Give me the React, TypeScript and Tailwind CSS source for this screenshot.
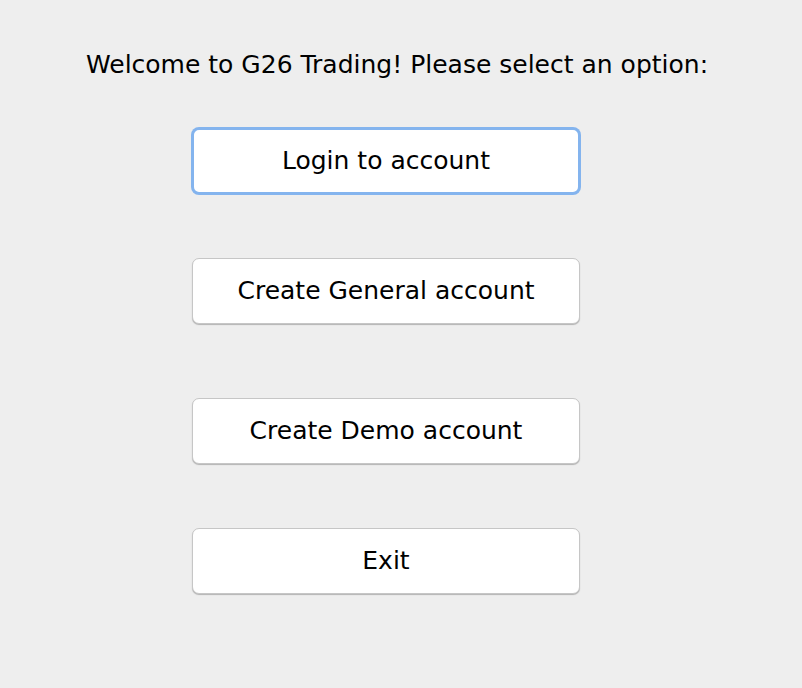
const options = [
  { label: 'Login to account', focused: true, mt: 'mt-[48px]' },
  { label: 'Create General account', focused: false, mt: 'mt-[64px]' },
  { label: 'Create Demo account', focused: false, mt: 'mt-[74px]' },
  { label: 'Exit', focused: false, mt: 'mt-[64px]' },
];

export default function App() {
  return (
    <div
      className="w-[802px] h-[688px] bg-[#eeeeee] text-black"
      style={{ fontFamily: '"DejaVu Sans", "Liberation Sans", sans-serif' }}
    >
      <div className="pt-[50px] pl-[86px] text-[25px] leading-[30px] h-[80px] whitespace-nowrap">
        Welcome to G26 Trading! Please select an option:
      </div>
      <div className="pl-[192px] flex flex-col">
        {options.map((o) => (
          <button
            key={o.label}
            className={`${o.mt} w-[388px] h-[66px] bg-white rounded-[7px] text-[25px] flex items-center justify-center ${
              o.focused
                ? 'border-2 border-[#84b4ee] ring-1 ring-[#84b4ee]'
                : 'border border-[#c6c6c6] shadow-[0_1px_1px_rgba(0,0,0,0.25)]'
            }`}
          >
            {o.label}
          </button>
        ))}
      </div>
    </div>
  );
}
